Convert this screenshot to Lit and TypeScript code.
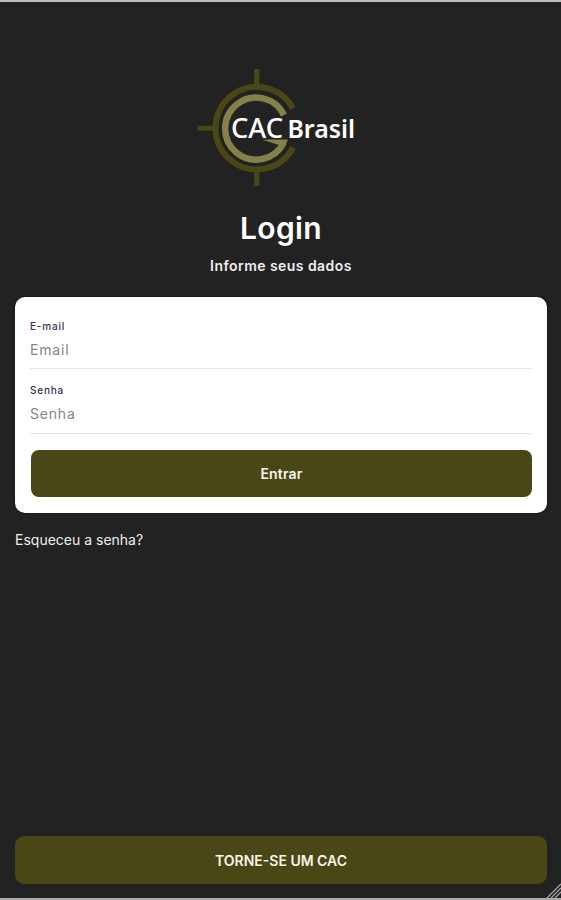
import { LitElement, html, css } from "lit";
import { customElement, property } from "lit/decorators.js";

@customElement("brand-logo")
class BrandLogo extends LitElement {
  static styles = css`
    :host { display: block; height: 120px; }
    svg { display: block; width: 164px; height: 120px; overflow: visible; }
    .dark { fill: none; stroke: #4a4716; stroke-width: 6; }
    .tick { fill: none; stroke: #4a4716; stroke-width: 5; }
    .light { fill: none; stroke: #848148; stroke-width: 6.5; }
    .spike { fill: #848148; }
    text { font-family: "Noto Sans", sans-serif; fill: #fff; stroke: #222; stroke-width: 2.5px; paint-order: stroke; }
    .cac { font-size: 26.5px; font-weight: 500; }
    .brasil { font-size: 25px; font-weight: 600; }
  `;
  render() {
    return html`<svg viewBox="195 67 164 120" role="img" aria-label="CAC Brasil">
      <path class="tick" d="M256.7 69V86M256.7 170V186M197.5 128.3H214" />
      <path class="dark" d="M293 108.5A41.2 41.2 0 1 0 293 147.8" />
      <path class="light" d="M284 115A31 31 0 1 0 283.6 143" />
      <path class="spike" d="M262 139.5H288L285.5 145L277 144.5Z" />
      <text class="cac" x="231" y="137.7" textLength="52" lengthAdjust="spacingAndGlyphs">CAC</text>
      <text class="brasil" x="287.5" y="138" textLength="67.5" lengthAdjust="spacingAndGlyphs">Brasil</text>
    </svg>`;
  }
}

@customElement("form-field")
class FormField extends LitElement {
  @property() label = "";
  @property() hint = "";
  @property() type = "text";
  static styles = css`
    :host { display: block; box-sizing: border-box; border-bottom: 1px solid #e4e4e4; }
    label { display: block; height: 16px; font: 500 10px/16px Inter, sans-serif; color: #37304a; letter-spacing: 0.8px; }
    input { display: block; box-sizing: border-box; width: 100%; height: 32px; padding: 0; border: 0; outline: 0; background: none;
      font: 400 14px/32px Inter, sans-serif; letter-spacing: 0.8px; }
    input::placeholder { color: #858585; opacity: 1; }
  `;
  render() {
    return html`<label>${this.label}</label><input type=${this.type} placeholder=${this.hint} />`;
  }
}

@customElement("app-root")
class AppRoot extends LitElement {
  static styles = css`
    :host { display: flex; flex-direction: column; position: relative; box-sizing: border-box; height: 900px; padding: 65px 14px 14px 15px;
      background: #222; border-top: 2px solid #b9bcbe; border-bottom: 2px solid #aaa; color: #fff; font-family: Inter, sans-serif; overflow: hidden; }
    brand-logo { align-self: flex-start; margin-left: 180px; }
    h1 { margin: 21px 0 0; font-size: 30px; line-height: 40px; font-weight: 600; text-align: center; letter-spacing: 0.4px; }
    .sub { margin: 8px 0 0; font-size: 14px; line-height: 20px; font-weight: 600; text-align: center; color: #eee; letter-spacing: 0.45px; }
    .card { box-sizing: border-box; height: 216px; margin-top: 21px; padding: 21px 15px 16px; background: #fff; border-radius: 10px;
      box-shadow: 0 0 2px #000; }
    .btn { display: block; box-sizing: border-box; width: 100%; padding: 0; border: 0; background: #4a4716; color: #f8f6e8;
      font: 600 14px Inter, sans-serif; }
    .entrar { width: auto; min-width: calc(100% - 1px); height: 47px; margin: 16px 0 0 1px; border-radius: 8px; letter-spacing: 0.2px; }
    .first { height: 51px; margin-bottom: 13px; }
    .second { height: 52px; }
    .forgot { align-self: flex-start; margin-top: 17px; font-size: 14px; line-height: 20px; color: #eee; }
    .join { height: 48px; margin-top: auto; border-radius: 9px; }
    .grip { position: absolute; right: 0; bottom: 0; width: 15px; height: 15px; fill: none; stroke: #aaa; stroke-width: 1.2; }
  `;
  render() {
    return html`
      <brand-logo></brand-logo>
      <h1>Login</h1>
      <p class="sub">Informe seus dados</p>
      <section class="card">
        <form-field class="first" label="E-mail" hint="Email"></form-field>
        <form-field class="second" label="Senha" hint="Senha" type="password"></form-field>
        <button class="btn entrar">Entrar</button>
      </section>
      <a class="forgot">Esqueceu a senha?</a>
      <button class="btn join">TORNE-SE UM CAC</button>
      <svg class="grip" viewBox="0 0 15 15"><path d="M1 15L15 1M5 15L15 5M9 15L15 9" /></svg>
    `;
  }
}
